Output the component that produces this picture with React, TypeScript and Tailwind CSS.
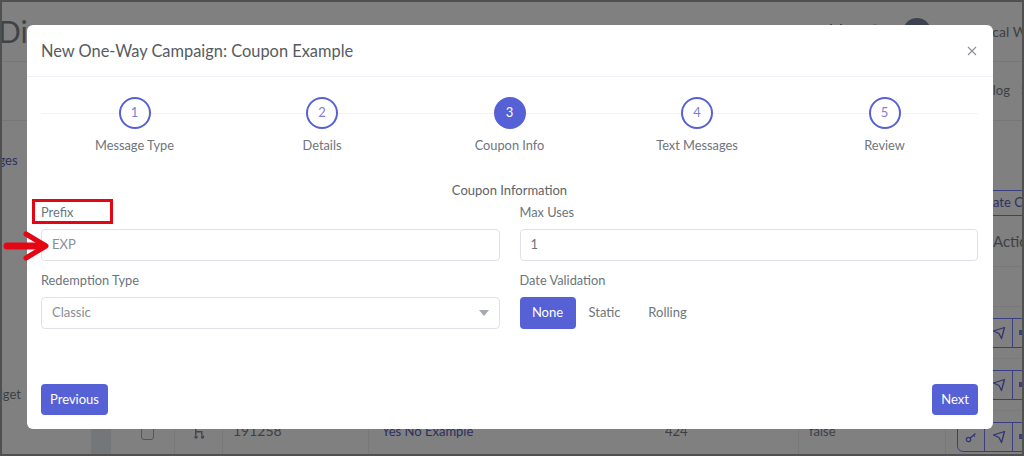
import type { ReactNode } from "react";

function Step({ n, label, active }: { n: number; label: string; active?: boolean }) {
  return (
    <div className="flex w-[187px] flex-col items-center">
      <div
        className={
          active
            ? "z-10 flex h-8 w-8 items-center justify-center rounded-full border-2 border-[#5661d6] bg-[#5661d6] text-[13px] text-white"
            : "z-10 flex h-8 w-8 items-center justify-center rounded-full border-2 border-[#5661d6] bg-white text-[13px] text-[#7a80dc]"
        }
      >
        {n}
      </div>
      <div className="mt-[6px] text-[12.8px] leading-[20px] text-[#6e757d]">{label}</div>
    </div>
  );
}

function Field({ label, children }: { label: string; children: ReactNode }) {
  return (
    <div className="flex flex-col">
      <div className="h-[20px] text-[12.8px] leading-[20px] text-[#6c757d]">{label}</div>
      <div className="mt-[7px]">{children}</div>
    </div>
  );
}

function Send() {
  return (
    <svg width="14" height="14" viewBox="0 0 14 14" fill="none" stroke="#2f3370" strokeWidth="1.3" strokeLinejoin="round">
      <path d="M1.5 5L12.5 1.5L9.5 12.5L7 7.5z" />
    </svg>
  );
}

function Key() {
  return (
    <svg width="12" height="12" viewBox="0 0 12 12" fill="none" stroke="#2f3370" strokeWidth="1.2">
      <circle cx="3.5" cy="8.5" r="2.2" />
      <path d="M5.3 7L10.5 2.5M8.5 4.2l1.4 1.4" />
    </svg>
  );
}

function Actions({ last }: { last?: boolean }) {
  return (
    <div className={last ? "flex h-[30px] w-[90px] shrink-0 rounded-bl-md border border-[#3a3f80]" : "flex h-[30px] w-[90px] shrink-0 border border-[#3a3f80]"}>
      <div className="flex w-[27px] items-center justify-center border-r border-[#3a3f80]">
        <Key />
      </div>
      <div className="flex w-[28px] items-center justify-center border-r border-[#3a3f80]">
        <Send />
      </div>
      <div className="flex flex-1 items-center pl-[6px]">
        <div className="h-[5px] w-[3px] bg-[#3a3f80]" />
      </div>
    </div>
  );
}

function Row({ cells }: { cells?: boolean }) {
  return (
    <div className="flex h-[52px] shrink-0 border-b border-[#7a7a7a] pl-[17px]">
      <div className="flex w-[46px] shrink-0 items-center pb-[7px] pl-[13px]">
        {cells && <div className="h-[13px] w-[13px] rounded-[3px] border border-[#555555]" />}
      </div>
      <div className="flex w-[48px] shrink-0 items-center border-l border-[#787878] pb-[7px] pl-[18px]">
        {cells && (
          <svg width="12" height="12" viewBox="0 0 12 12" fill="#44474c">
            <circle cx="3" cy="10" r="1.7" />
            <circle cx="9.5" cy="10" r="1.7" />
            <path d="M2 1h1.5v3h6v4H8V5.5H3.5V8H2z" />
          </svg>
        )}
      </div>
      <div className="flex w-[146px] shrink-0 items-center border-l border-[#787878] pb-[12px] pl-[10px] text-[14px] text-[#3c4045]">
        {cells && "191258"}
      </div>
      <div className="flex w-[287px] shrink-0 items-center border-l border-[#787878] pb-[9px] pl-[13px] text-[13px] text-[#2c3060]">
        {cells && "Yes No Example"}
      </div>
      <div className="flex w-[143px] shrink-0 items-center pb-[9px] pl-[10px] text-[13px] text-[#3c4045]">{cells && "424"}</div>
      <div className="flex w-[147px] shrink-0 items-center border-l border-[#787878] pb-[9px] pl-[10px] text-[13px] text-[#3c4045]">
        {cells && "false"}
      </div>
      <div className="flex shrink-0 items-center border-l border-[#787878] pl-[11px]">
        <Actions last={cells} />
      </div>
    </div>
  );
}

export default function App() {
  return (
    <div
      style={{ fontFamily: '"Lato", "Noto Sans", sans-serif' }}
      className="relative h-[456px] w-[1024px] overflow-hidden border-2 border-[#505050] bg-[#808080]"
    >
      <div className="flex h-[60px] items-center overflow-hidden border-b border-[#777777]">
        <div className="-ml-[4px] w-[827px] shrink-0 pb-[1px] text-[30px] leading-none text-[#3f4347]">Dia</div>
        <svg className="shrink-0" width="22" height="16" viewBox="0 0 22 16" fill="none" stroke="#3c4045" strokeWidth="2">
          <path d="M1 15L6 1L11 9L16 1L21 15" />
        </svg>
        <svg className="ml-[21px] shrink-0" width="14" height="16" viewBox="0 0 14 16" fill="none" stroke="#3c4045" strokeWidth="2">
          <circle cx="7" cy="7" r="5.5" />
        </svg>
        <div className="ml-[21px] h-7 w-7 shrink-0 rounded-full bg-[#3d4250]" />
        <div className="ml-[30px] shrink-0 whitespace-nowrap text-[14px] text-[#3c4045]">Medical W</div>
      </div>
      <div className="flex h-[59px] items-center justify-end gap-[11px] overflow-hidden border-b border-[#777777] text-[13px] text-[#3c4045]">
        <span>log</span>
        <span className="-mr-[6px]">S</span>
      </div>
      <div className="flex h-[334px]">
        <div className="flex w-[89px] shrink-0 flex-col overflow-hidden">
          <div className="-ml-[40px] mt-[30px] whitespace-nowrap text-[13px] text-[#2c3060]">Messages</div>
          <div className="mt-[214px] whitespace-nowrap text-[13px] text-[#3c4045]">
            <div className="-ml-[22px]">Budget</div>
          </div>
        </div>
        <div className="flex w-[20px] shrink-0 flex-col justify-end">
          <div className="h-[27px] bg-[#73777a]" />
        </div>
        <div className="flex min-w-0 flex-1 flex-col">
          <div className="flex h-[95px] shrink-0 items-end pb-0">
            <div className="ml-[846px] flex h-[26px] w-[100px] shrink-0 items-center whitespace-nowrap rounded-l border border-[#3a3f80] pl-[15px] text-[13px] text-[#2c3060]">
              Create Campaign
            </div>
          </div>
          <div className="flex h-[51px] shrink-0 items-center border-b border-[#787878] pl-[882px] text-[15px] text-[#3c4045]">Action</div>
          <div className="h-[40px] shrink-0 border-b border-[#787878]" />
          <Row />
          <Row />
          <Row cells />
        </div>
      </div>

      <div className="absolute left-[25px] top-[23px] flex h-[404px] w-[966px] flex-col rounded-md bg-white">
        <div className="flex h-[52px] items-center justify-between border-b border-[#eef1f6] pl-[14px] pr-[15px]">
          <div className="pt-[1px] text-[16.4px] text-[#565b61]">New One-Way Campaign: Coupon Example</div>
          <svg width="12" height="12" viewBox="0 0 12 12" stroke="#8a8f95" strokeWidth="1.1">
            <path d="M2 2l8 8M10 2l-8 8" />
          </svg>
        </div>
        <div className="flex flex-1 flex-col pl-[14px] pr-[15px]">
          <div className="relative mt-[20px] flex justify-between">
            <div className="absolute left-0 right-0 top-[16px] h-px bg-[#eff2f8]" />
            <Step n={1} label="Message Type" />
            <Step n={2} label="Details" />
            <Step n={3} label="Coupon Info" active />
            <Step n={4} label="Text Messages" />
            <Step n={5} label="Review" />
          </div>
          <div className="mt-[25px] text-center text-[13px] leading-[20px] text-[#5d6369]">Coupon Information</div>
          <div className="mt-[2px] grid grid-cols-2 gap-x-[20px] gap-y-[9px]">
            <Field label="Prefix">
              <div className="flex h-[32px] items-center rounded-[4px] border border-[#dfe1ea] px-[10px] text-[13px] text-[#868e96]">EXP</div>
            </Field>
            <Field label="Max Uses">
              <div className="flex h-[32px] items-center rounded-[4px] border border-[#dfe1ea] px-[10px] text-[13px] text-[#6c757d]">1</div>
            </Field>
            <Field label="Redemption Type">
              <div className="flex h-[32px] items-center justify-between rounded-[4px] border border-[#dfe1ea] px-[10px] text-[13px] text-[#868e96]">
                <span>Classic</span>
                <svg width="10" height="6" viewBox="0 0 10 6" fill="#a5aab0">
                  <path d="M0 0h10L5 6z" />
                </svg>
              </div>
            </Field>
            <Field label="Date Validation">
              <div className="flex h-[32px] items-center text-[13px] text-[#6c757d]">
                <div className="flex h-[32px] w-[56px] items-center justify-center rounded-[4px] bg-[#5661d6] text-white">None</div>
                <div className="flex w-[58px] justify-center">Static</div>
                <div className="flex w-[68px] justify-center">Rolling</div>
              </div>
            </Field>
          </div>
          <div className="mb-[14px] mt-auto flex justify-between">
            <button className="h-[31px] w-[67px] rounded-[4px] bg-[#5661d6] text-[13px] text-white">Previous</button>
            <button className="h-[31px] w-[46px] rounded-[4px] bg-[#5661d6] text-[13px] text-white">Next</button>
          </div>
        </div>
      </div>

      <div className="absolute left-[30px] top-[197px] h-[25px] w-[81px] border-[3px] border-[#e30613]" />
      <svg className="absolute left-[1px] top-[227px]" width="50" height="34" viewBox="0 0 50 34" fill="none" stroke="#e30613" strokeLinecap="round" strokeLinejoin="round">
        <path d="M4 17H40" strokeWidth="7" />
        <path d="M23 5L43 17L23 29" strokeWidth="5" />
      </svg>
    </div>
  );
}
